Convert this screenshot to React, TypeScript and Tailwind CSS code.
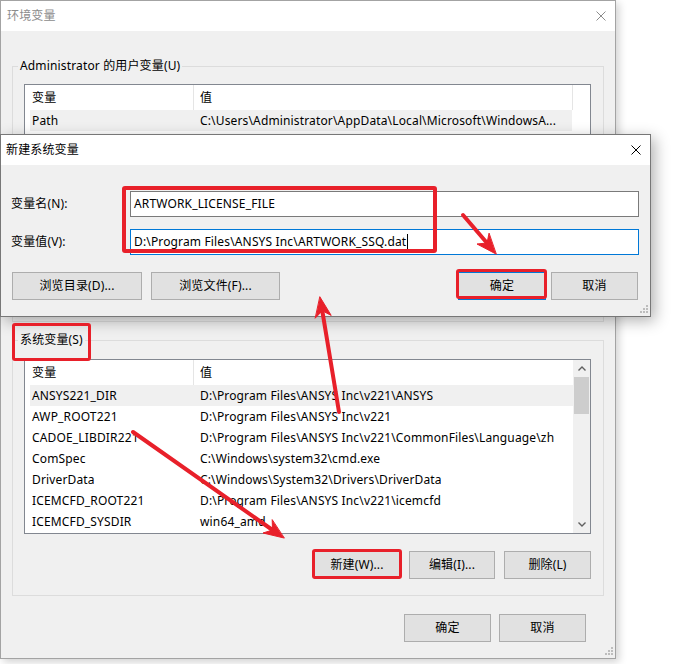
import React from "react";

type BtnProps = { children: React.ReactNode; className: string };
const Btn = ({ children, className }: BtnProps) => (
  <div className={`flex h-[28px] items-center justify-center border bg-[#e1e1e1] text-[12px] leading-none ${className}`}>
    {children}
  </div>
);

const XIcon = ({ color }: { color: string }) => (
  <svg width="10" height="10" viewBox="0 0 10 10">
    <path d="M0.5 0.5 L9.5 9.5 M9.5 0.5 L0.5 9.5" stroke={color} strokeWidth="1" fill="none" />
  </svg>
);

const Grip = () => (
  <svg width="8" height="8" viewBox="0 0 8 8">
    <g fill="#bdbdbd">
      <rect x="6" y="0" width="2" height="2" />
      <rect x="3" y="3" width="2" height="2" />
      <rect x="6" y="3" width="2" height="2" />
      <rect x="0" y="6" width="2" height="2" />
      <rect x="3" y="6" width="2" height="2" />
      <rect x="6" y="6" width="2" height="2" />
    </g>
  </svg>
);

const Scrollbar = () => (
  <div className="flex w-[17px] flex-col bg-[#f0f0f0]">
    <div className="flex h-[17px] items-center justify-center">
      <svg width="8" height="5" viewBox="0 0 8 5">
        <path d="M0.5 4.5 L4 1 L7.5 4.5" stroke="#606060" strokeWidth="1.4" fill="none" />
      </svg>
    </div>
    <div className="mx-[1px] h-[37px] bg-[#cdcdcd]" />
    <div className="flex-1" />
    <div className="flex h-[17px] items-center justify-center">
      <svg width="8" height="5" viewBox="0 0 8 5">
        <path d="M0.5 0.5 L4 4 L7.5 0.5" stroke="#606060" strokeWidth="1.4" fill="none" />
      </svg>
    </div>
  </div>
);

type ListProps = { rows: [string, string][]; scroll: boolean; heightClass: string };
const ListView = ({ rows, scroll, heightClass }: ListProps) => (
  <div className={`ml-[11px] mr-[12px] flex overflow-hidden border border-[#828790] bg-white ${heightClass}`}>
    <div className="flex min-w-0 flex-1 flex-col pl-[5px]">
      <div className="flex h-[25px] items-center">
        <div className="w-[163px] pl-[2px]">变量</div>
        <div className="w-px self-stretch bg-[#e5e5e5]" />
        <div className="flex-1 pl-[6px]">值</div>
      </div>
      {rows.map((r, i) => (
        <div key={i} className={`flex h-[21px] items-center whitespace-nowrap ${i === 0 ? "bg-[#f0f0f0]" : ""}`}>
          <div className="w-[164px] pl-[2px]">{r[0]}</div>
          <div className="min-w-0 flex-1 overflow-hidden pl-[6px]">{r[1]}</div>
        </div>
      ))}
    </div>
    {scroll ? (
      <Scrollbar />
    ) : (
      <div className="w-[18px]">
        <div className="h-[25px] w-px bg-[#e5e5e5]" />
      </div>
    )}
  </div>
);

const userRows: [string, string][] = [
  ["Path", "C:\\Users\\Administrator\\AppData\\Local\\Microsoft\\WindowsA..."],
];

const sysRows: [string, string][] = [
  ["ANSYS221_DIR", "D:\\Program Files\\ANSYS Inc\\v221\\ANSYS"],
  ["AWP_ROOT221", "D:\\Program Files\\ANSYS Inc\\v221"],
  ["CADOE_LIBDIR221", "D:\\Program Files\\ANSYS Inc\\v221\\CommonFiles\\Language\\zh"],
  ["ComSpec", "C:\\Windows\\system32\\cmd.exe"],
  ["DriverData", "C:\\Windows\\System32\\Drivers\\DriverData"],
  ["ICEMCFD_ROOT221", "D:\\Program Files\\ANSYS Inc\\v221\\icemcfd"],
  ["ICEMCFD_SYSDIR", "win64_amd"],
];

const RowButtons = () => (
  <div className="mr-[12px] mt-[17px] flex justify-end gap-[9px] pb-[16px]">
    <Btn className="w-[86px] border-[#adadad]">新建(W)...</Btn>
    <Btn className="w-[86px] border-[#adadad]">编辑(I)...</Btn>
    <Btn className="w-[87px] border-[#adadad]">删除(L)</Btn>
  </div>
);

export default function App() {
  return (
    <div className="relative h-[664px] w-[676px] overflow-hidden bg-white text-[12px] leading-[16px] tracking-[0.15px] text-black font-['Noto_Sans','Noto_Sans_CJK_SC',sans-serif]">
      {/* Background window: 环境变量 */}
      <div className="absolute left-0 top-0 flex h-[659px] w-[616px] flex-col border border-[#a3a3a3] bg-[#f0f0f0] shadow-[3px_3px_8px_rgba(0,0,0,0.18)]">
        <div className="flex h-[30px] items-center justify-between bg-white pl-[6px] pr-[9px] text-[#8c8c8c]">
          <span>环境变量</span>
          <XIcon color="#8c8c8c" />
        </div>
        <div className="flex flex-1 flex-col px-[11px]">
          <fieldset className="mt-[27px] border border-[#dcdcdc]">
            <legend className="ml-[5px] px-[2px] leading-[16px]">Administrator 的用户变量(U)</legend>
            <div className="mt-[10px]">
              <ListView rows={userRows} scroll={false} heightClass="h-[176px]" />
            </div>
            <RowButtons />
          </fieldset>
          <fieldset className="mt-[10px] border border-[#dcdcdc]">
            <legend className="ml-[5px] px-[2px] leading-[16px]">系统变量(S)</legend>
            <div className="mt-[11px]">
              <ListView rows={sysRows} scroll={true} heightClass="h-[175px]" />
            </div>
            <RowButtons />
          </fieldset>
          <div className="mr-[18px] mt-[18px] flex justify-end gap-[8px]">
            <Btn className="w-[87px] border-[#adadad]">确定</Btn>
            <Btn className="w-[87px] border-[#adadad]">取消</Btn>
          </div>
        </div>
        <div className="absolute bottom-[3px] right-[2px]">
          <Grip />
        </div>
      </div>

      {/* Dialog: 新建系统变量 */}
      <div className="absolute left-0 top-[134px] flex h-[183px] w-[651px] flex-col border border-[#777777] bg-[#f0f0f0] shadow-[4px_4px_14px_rgba(0,0,0,0.3)]">
        <div className="flex h-[30px] items-center justify-between bg-white pl-[5px] pr-[9px]">
          <span>新建系统变量</span>
          <XIcon color="#000000" />
        </div>
        <div className="flex flex-1 flex-col pl-[10px] pr-[11px]">
          <div className="mt-[26px] flex items-center">
            <div className="w-[119px]">变量名(N):</div>
            <div className="flex h-[26px] flex-1 items-center border border-[#7a7a7a] bg-white px-[3px]">
              ARTWORK_LICENSE_FILE
            </div>
          </div>
          <div className="mt-[12px] flex items-center">
            <div className="w-[119px]">变量值(V):</div>
            <div className="flex h-[26px] flex-1 items-center border border-[#0078d7] bg-white px-[3px]">
              <span>D:\Program Files\ANSYS Inc\ARTWORK_SSQ.dat</span>
              <span className="ml-px h-[16px] w-px bg-black" />
            </div>
          </div>
          <div className="mt-[17px] flex items-center px-[1px]">
            <Btn className="w-[130px] border-[#adadad]">浏览目录(D)...</Btn>
            <Btn className="ml-[9px] w-[129px] border-[#adadad]">浏览文件(F)...</Btn>
            <div className="flex-1" />
            <Btn className="w-[88px] border-[#0078d7]">确定</Btn>
            <Btn className="ml-[5px] w-[87px] border-[#adadad]">取消</Btn>
          </div>
        </div>
        <div className="absolute bottom-[3px] right-[2px]">
          <Grip />
        </div>
      </div>

      {/* Red annotation boxes */}
      <div className="absolute left-[122px] top-[186px] h-[67px] w-[315px] rounded-[3px] border-[4px] border-[#e8202a]" />
      <div className="absolute left-[456px] top-[269px] h-[30px] w-[91px] rounded-[3px] border-[3px] border-[#e8202a]" />
      <div className="absolute left-[12px] top-[323px] h-[38px] w-[79px] rounded-[3px] border-[3px] border-[#e8202a]" />
      <div className="absolute left-[312px] top-[549px] h-[30px] w-[90px] rounded-[3px] border-[3px] border-[#e8202a]" />

      {/* Red arrows */}
      <svg className="pointer-events-none absolute left-0 top-0" width="676" height="664" viewBox="0 0 676 664">
        <g stroke="#e8202a" fill="#e8202a" strokeLinecap="round" strokeLinejoin="round">
          <line x1="463" y1="215" x2="487" y2="243" strokeWidth="4" />
          <polygon points="496,254 477,244 487,243 489,233.5" strokeWidth="1" />
          <line x1="339" y1="412" x2="322.3" y2="310.8" strokeWidth="4" />
          <polygon points="320,297 331.2,315.4 322.3,310.8 315.4,318" strokeWidth="1" />
          <line x1="133" y1="432" x2="272.5" y2="530" strokeWidth="4" />
          <polygon points="284,538 263,533 272.5,530 272.2,520" strokeWidth="1" />
        </g>
      </svg>
    </div>
  );
}
